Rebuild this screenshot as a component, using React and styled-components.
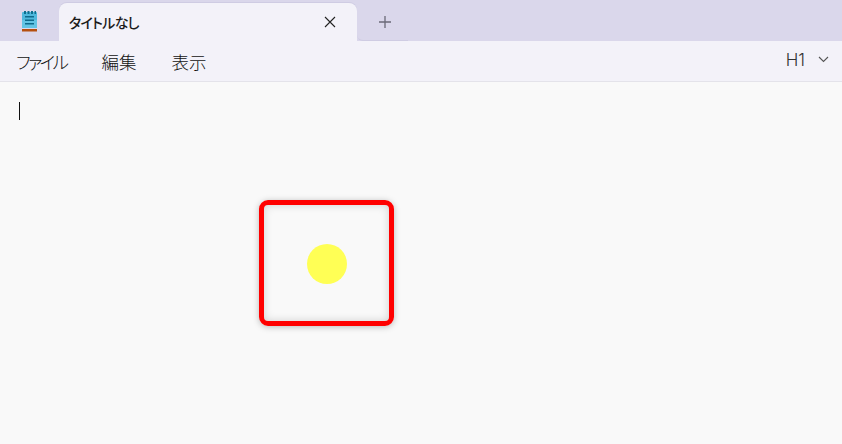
import React from "react";
import styled, { createGlobalStyle } from "styled-components";

const Global = createGlobalStyle`
  html, body { margin: 0; padding: 0; background: #f9f9f9; }
  * { box-sizing: border-box; }
`;
const Window = styled.div`
  position: relative; width: 842px; height: 444px; overflow: hidden;
  display: flex; flex-direction: column; background: #f9f9f9;
  font-family: "Noto Sans CJK JP", "Noto Sans", sans-serif; color: #1b1b1b;
  font-feature-settings: "palt" 1;
`;
const TabStrip = styled.div`
  height: 41px; flex: none; display: flex; align-items: flex-end;
  background: #dad7eb; padding-left: 18px; position: relative;
`;
const AppIcon = styled.svg`
  width: 22px; height: 22px; flex: none; align-self: flex-start; margin: 10px 19px 0 0;
  transform: translateX(1px);
`;
const Tab = styled.div`
  width: 298px; height: 38px; flex: none; display: flex; align-items: center;
  padding: 0 19px 0 10px; background: #f3f2f9; border-radius: 8px 8px 0 0;
  box-shadow: 0 -1px 0 #cfcce3;
`;
const TabTitle = styled.span`
  flex: 1; font-size: 14px; line-height: 20px; font-weight: 500; margin-top: -1px; letter-spacing: -0.7px;
`;
const CloseIcon = styled.svg`
  width: 12px; height: 12px; margin-top: -1px; margin-right: 2px;
`;
const NewTab = styled.div`
  width: 51px; height: 38px; flex: none; display: flex; align-items: center; justify-content: center;
  padding-left: 4px;
  border-bottom: 1px solid #cfcce3; border-bottom-left-radius: 6px;
`;
const PlusIcon = styled.svg`
  width: 14px; height: 14px;
`;
const MenuBar = styled.div`
  height: 41px; flex: none; display: flex; align-items: center; padding: 0 13px 0 16px;
  background: #f3f2f9; border-bottom: 1px solid #e4e3ea;
`;
const MenuItem = styled.span`
  font-size: 17.5px; line-height: 24px; font-weight: 300; color: #111;
  margin-right: 35px; margin-top: 1px;
  letter-spacing: ${(p) => p.$tracking || 0}px;
`;
const Spacer = styled.div`flex: 1;`;
const Heading = styled.span`
  font-family: "Inter", "Noto Sans", sans-serif; font-size: 17px; font-weight: 300; color: #333;
  margin-right: 13px; margin-top: -2px;
`;
const Chevron = styled.svg`
  width: 11px; height: 7px; margin-top: -4px;
`;
const Editor = styled.div`
  flex: 1; background: #f9f9f9; padding: 20px 18px;
`;
const Caret = styled.div`
  width: 1px; height: 18px; background: #111; margin-left: 1px;
`;
const Highlight = styled.div`
  position: absolute; left: 259px; top: 200px; width: 135px; height: 126px;
  border: 5.5px solid #ff0000; border-radius: 9px;
  box-shadow: 0 1px 6px rgba(0,0,0,.25), inset 0 0 9px rgba(0,0,0,.17);
`;
const Pointer = styled.div`
  position: absolute; left: 307px; top: 244px; width: 40px; height: 40px;
  border-radius: 50%; background: #ffff55;
`;

export default function App() {
  return (
    <Window>
      <Global />
      <TabStrip>
        <AppIcon viewBox="0 0 22 22">
          <rect x="3" y="2" width="15" height="16" rx="1" fill="#4fb8dc" />
          <rect x="3" y="10" width="15" height="8" fill="#62c4e4" />
          <path d="M5 1h2v3H5zM8.500 1h2v3h-2zM12 1h2v3h-2zM15.500 1h1.500v3H15.500z" fill="#0f6f8f" />
          <path d="M6 6h9v1.500H6zM6 9.500h9V11H6zM6 13h9v1.500H6z" fill="#0f6a8c" />
          <rect x="3" y="19" width="15" height="2.500" fill="#b5500f" />
        </AppIcon>
        <Tab>
          <TabTitle>タイトルなし</TabTitle>
          <CloseIcon viewBox="0 0 12 12">
            <path d="M1 1l10 10M11 1L1 11" stroke="#222" strokeWidth="1.100" fill="none" />
          </CloseIcon>
        </Tab>
        <NewTab>
          <PlusIcon viewBox="0 0 14 14">
            <path d="M7 1v12M1 7h12" stroke="#6b6a78" strokeWidth="1.300" fill="none" />
          </PlusIcon>
        </NewTab>
      </TabStrip>
      <MenuBar>
        <MenuItem $tracking={-2.55}>ファイル</MenuItem>
        <MenuItem>編集</MenuItem>
        <MenuItem>表示</MenuItem>
        <Spacer />
        <Heading>H1</Heading>
        <Chevron viewBox="0 0 11 7">
          <path d="M1 1l4.500 4.500L10 1" stroke="#555" strokeWidth="1.100" fill="none" />
        </Chevron>
      </MenuBar>
      <Editor>
        <Caret />
      </Editor>
      <Highlight />
      <Pointer />
    </Window>
  );
}
